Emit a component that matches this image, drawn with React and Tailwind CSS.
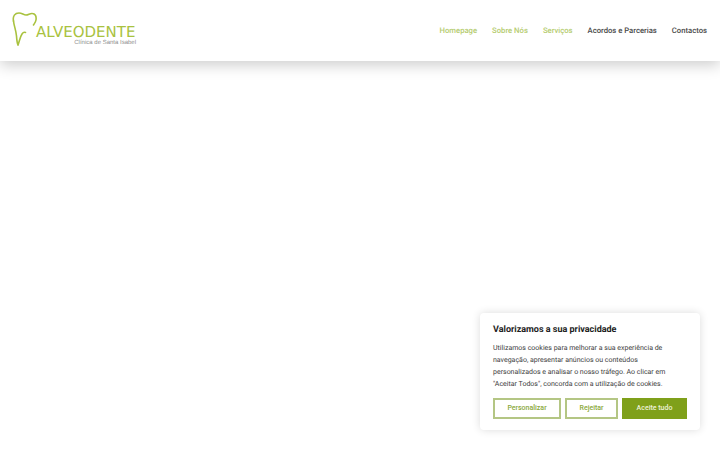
const navLinks = [
  { label: "Homepage", active: true },
  { label: "Sobre Nós", active: true },
  { label: "Serviços", active: true },
  { label: "Acordos e Parcerias", active: false },
  { label: "Contactos", active: false },
];

function Logo() {
  return (
    <div className="flex h-[36px] w-[124px] items-start">
      <svg width="25" height="34" viewBox="0 0 25 34" fill="none" className="mt-[-1px] shrink-0">
        <path
          d="M1.500 9C0.500 4 3 1 7 1C10 1 11.500 3 14 3C16.500 3 18 1 20.500 1.500C23.500 2 24.500 4.500 24 8C23.700 10 22.500 11.500 21.500 13"
          stroke="#a9c23f"
          strokeWidth="1.6"
          strokeLinecap="round"
        />
        <path
          d="M1.500 9C2 14 4 18 4.500 24C4.800 28 5 31 6 33C7.500 29 8 25 10 22C11 20.500 12.500 20 13.500 20.500"
          stroke="#a9c23f"
          strokeWidth="1.6"
          strokeLinecap="round"
        />
      </svg>
      <div className="ml-[-1px] flex w-[100px] flex-col items-end">
        <span className="mt-[12px] h-[14px] w-full text-[15px] leading-[14px] font-medium text-[#a9c23f] [font-family:'DejaVu_Sans',sans-serif] whitespace-nowrap">
          ALVEODENTE
        </span>
        <span className="mt-[1px] text-[6px] leading-[6px] text-[#8f8f8f] [font-family:'Liberation_Sans',sans-serif] whitespace-nowrap">
          Clínica de Santa Isabel
        </span>
      </div>
    </div>
  );
}

export default function App() {
  return (
    <div className="relative h-[450px] w-[720px] overflow-hidden bg-white [font-family:Roboto,sans-serif] [text-rendering:geometricPrecision]">
      <header className="flex h-[61px] items-center justify-between bg-white pr-[13px] pl-[12px] shadow-[0_4px_14px_rgba(0,0,0,0.2)]">
        <Logo />
        <nav className="flex gap-[15px]">
          {navLinks.map((link) => (
            <a
              key={link.label}
              href="#"
              className={`text-[7.700px] leading-[12px] font-medium whitespace-nowrap ${
                link.active ? "text-[#b5cc6f]" : "text-[#4a4a4a]"
              }`}
            >
              {link.label}
            </a>
          ))}
        </nav>
      </header>

      {/* aviso de cookies */}
      <div className="absolute top-[313px] left-[480px] w-[220px] rounded-[4px] bg-white px-[13px] pt-[11px] pb-[11px] shadow-[0_0_8px_rgba(0,0,0,0.14)]">
        <h2 className="text-[9px] leading-[13px] font-bold text-[#212121]">
          Valorizamos a sua privacidade
        </h2>
        <p className="mt-[5px] text-[7px] leading-[12px] text-[#404040]">
          Utilizamos cookies para melhorar a sua experiência de navegação, apresentar anúncios ou conteúdos
          personalizados e analisar o nosso tráfego. Ao clicar em "Aceitar Todos", concorda com a utilização de cookies.
        </p>
        <div className="mt-[8px] flex gap-[4px]">
          <button className="h-[21px] w-[68px] border-2 border-[#b4c684] bg-white text-[7px] font-medium text-[#8aa83a]">
            Personalizar
          </button>
          <button className="h-[21px] w-[53px] border-2 border-[#b4c684] bg-white text-[7px] font-medium text-[#8aa83a]">
            Rejeitar
          </button>
          <button className="h-[21px] w-[65px] bg-[#7fa01a] text-[7px] font-medium text-[#eef3dc]">
            Aceite tudo
          </button>
        </div>
      </div>
    </div>
  );
}
